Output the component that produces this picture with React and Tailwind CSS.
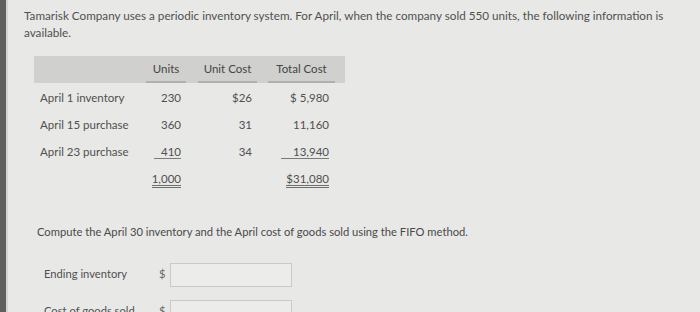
const rows = [
  { label: "April 1 inventory", units: "230", cost: "$26", total: "$ 5,980" },
  { label: "April 15 purchase", units: "360", cost: "31", total: "11,160" },
  { label: "April 23 purchase", units: "410", cost: "34", total: "13,940", line: true },
];

function Cell({ w, align = "text-right", pr = "pr-[5px]", children }) {
  return <div className={`${w} ${align} ${pr} shrink-0`}>{children}</div>;
}

export default function App() {
  return (
    <div
      className="flex h-[312px] w-[700px] overflow-hidden bg-[#e8e8e6] text-[#505050]"
      style={{ fontFamily: "Lato, 'Open Sans', sans-serif" }}
    >
      {/* dark edge of the screen */}
      <div className="w-[6px] shrink-0 bg-[#5f5f5c]" />
      <div className="w-[2px] shrink-0 bg-[#d4d4d2]" />

      <div className="flex-1 pl-[16px] pt-[7px]">
        <p className="w-[665px] text-[11.7px] leading-[17px]">
          Tamarisk Company uses a periodic inventory system. For April, when the company sold 550 units, the
          following information is available.
        </p>

        {/* inventory table */}
        <div className="ml-[10px] mt-[15px] w-[311px] text-[11.5px]">
          <div className="flex h-[27px] items-center bg-[#d0d0ce] text-[#454545]">
            <div className="w-[112px] shrink-0" />
            <div className="flex h-full w-[40px] shrink-0 items-center justify-center border-b-2 border-[#b0b0ae]">
              Units
            </div>
            <div className="w-[12px] shrink-0" />
            <div className="flex h-full w-[59px] shrink-0 items-center justify-center border-b-2 border-[#b0b0ae]">
              Unit Cost
            </div>
            <div className="w-[11px] shrink-0" />
            <div className="flex h-full w-[67px] shrink-0 items-center justify-center border-b-2 border-[#b0b0ae]">
              Total Cost
            </div>
          </div>

          <div className="h-[1px]" />
          {rows.map((r) => (
            <div key={r.label} className="flex h-[27px] items-center">
              <Cell w="w-[112px]" align="text-left" pr="pl-[6px]">
                {r.label}
              </Cell>
              <Cell w="w-[40px]">
                <span className={r.line ? "border-b border-[#7a7a7a] pl-[7px]" : ""}>{r.units}</span>
              </Cell>
              <div className="w-[12px] shrink-0" />
              <Cell w="w-[59px]">{r.cost}</Cell>
              <div className="w-[11px] shrink-0" />
              <Cell w="w-[67px]" pr="pr-[6px]">
                <span className={r.line ? "border-b border-[#7a7a7a] pl-[12px]" : ""}>{r.total}</span>
              </Cell>
            </div>
          ))}

          <div className="flex h-[27px] items-center">
            <div className="w-[112px] shrink-0" />
            <Cell w="w-[40px]">
              <span className="border-b-[3px] border-double border-[#6f6f6f]">1,000</span>
            </Cell>
            <div className="w-[12px] shrink-0" />
            <div className="w-[59px] shrink-0" />
            <div className="w-[11px] shrink-0" />
            <Cell w="w-[67px]" pr="pr-[6px]">
              <span className="border-b-[3px] border-double border-[#6f6f6f]">$31,080</span>
            </Cell>
          </div>
        </div>

        <p className="ml-[13px] mt-[32px] text-[11.2px] text-[#4a4a4a]">
          Compute the April 30 inventory and the April cost of goods sold using the FIFO method.
        </p>

        {/* answer fields */}
        <div className="ml-[20px] mt-[22px] flex flex-col gap-[13px] text-[11.2px]">
          <div className="flex items-center">
            <span className="w-[115px] shrink-0">Ending inventory</span>
            <span className="w-[11px] shrink-0 text-[#666]">$</span>
            <div className="h-[24px] w-[122px] border border-[#c9c9c7] bg-[#ececea]" />
          </div>
          <div className="flex items-center">
            <span className="w-[115px] shrink-0">Cost of goods sold</span>
            <span className="w-[11px] shrink-0 text-[#666]">$</span>
            <div className="h-[24px] w-[122px] border border-[#c9c9c7] bg-[#ececea]" />
          </div>
        </div>
      </div>
    </div>
  );
}
